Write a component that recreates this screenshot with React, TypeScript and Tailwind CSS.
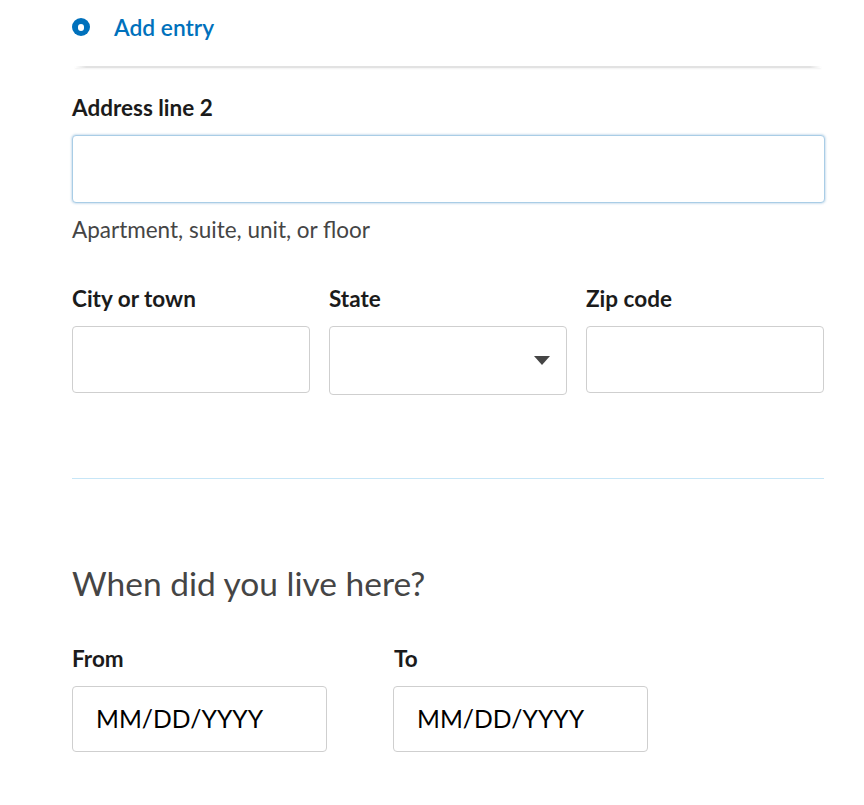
import React from "react";

export default function App() {
  return (
    <div className="w-[864px] h-[805px] overflow-hidden bg-white font-['Lato','Noto_Sans',sans-serif] text-[#1b1b1b]">
      <div className="pl-[72px] w-[824px]">
        <div className="h-[54px] flex items-center">
          <div className="w-[18px] h-[18px] rounded-full bg-[#0071bc] flex items-center justify-center">
            <div className="w-[6px] h-[7px] rounded-full bg-white" />
          </div>
          <span className="ml-[24px] text-[22.8px] font-semibold text-[#0071bc] leading-none">Add entry</span>
        </div>
        <div className="mt-[12px] ml-[3px] w-[746px] h-[2px] bg-[linear-gradient(to_right,transparent,#e2e2e2_1.5%,#e2e2e2_98.5%,transparent)] shadow-[0_1px_2px_rgba(0,0,0,0.06)]" />

        <div className="mt-[28px] text-[22.5px] font-bold leading-[24px]">Address line 2</div>
        <div className="mt-[15px] w-[753px] h-[68px] rounded-[4px] border border-[#a9cde6] shadow-[0_0_2px_1px_rgba(120,170,210,0.35)] bg-white" />
        <div className="mt-[15px] text-[22.5px] leading-[24px] text-[#454545]">Apartment, suite, unit, or floor</div>

        <div className="mt-[45px] grid grid-cols-3 gap-x-[19px] w-[752px]">
          <div>
            <div className="text-[22.5px] font-bold leading-[24px]">City or town</div>
            <div className="mt-[15px] h-[67px] rounded-[4px] border border-[#cfcfcf] bg-white" />
          </div>
          <div>
            <div className="text-[22.5px] font-bold leading-[24px]">State</div>
            <div className="mt-[15px] h-[69px] rounded-[4px] border border-[#cfcfcf] bg-white flex items-center justify-end pr-[16px]">
              <svg width="16" height="9" viewBox="0 0 16 9">
                <path d="M0 0 L16 0 L8 9 Z" fill="#454545" />
              </svg>
            </div>
          </div>
          <div>
            <div className="text-[22.5px] font-bold leading-[24px]">Zip code</div>
            <div className="mt-[15px] h-[67px] rounded-[4px] border border-[#cfcfcf] bg-white" />
          </div>
        </div>

        <div className="mt-[83px] w-[752px] h-px bg-[#c7e6f7]" />

        <div className="mt-[84px] text-[33.5px] font-normal leading-[40px] text-[#454545]">When did you live here?</div>

        <div className="mt-[44px] flex gap-x-[66px]">
          <div className="w-[255px]">
            <div className="text-[22.5px] font-bold leading-[24px]">From</div>
            <div className="mt-[15px] h-[66px] rounded-[4px] border border-[#cfcfcf] bg-white flex items-center pl-[23px] text-[24.7px] text-black">
              MM/DD/YYYY
            </div>
          </div>
          <div className="w-[255px]">
            <div className="text-[22.5px] font-bold leading-[24px] pl-[1px]">To</div>
            <div className="mt-[15px] h-[66px] rounded-[4px] border border-[#cfcfcf] bg-white flex items-center pl-[23px] text-[24.7px] text-black">
              MM/DD/YYYY
            </div>
          </div>
        </div>
      </div>
    </div>
  );
}
